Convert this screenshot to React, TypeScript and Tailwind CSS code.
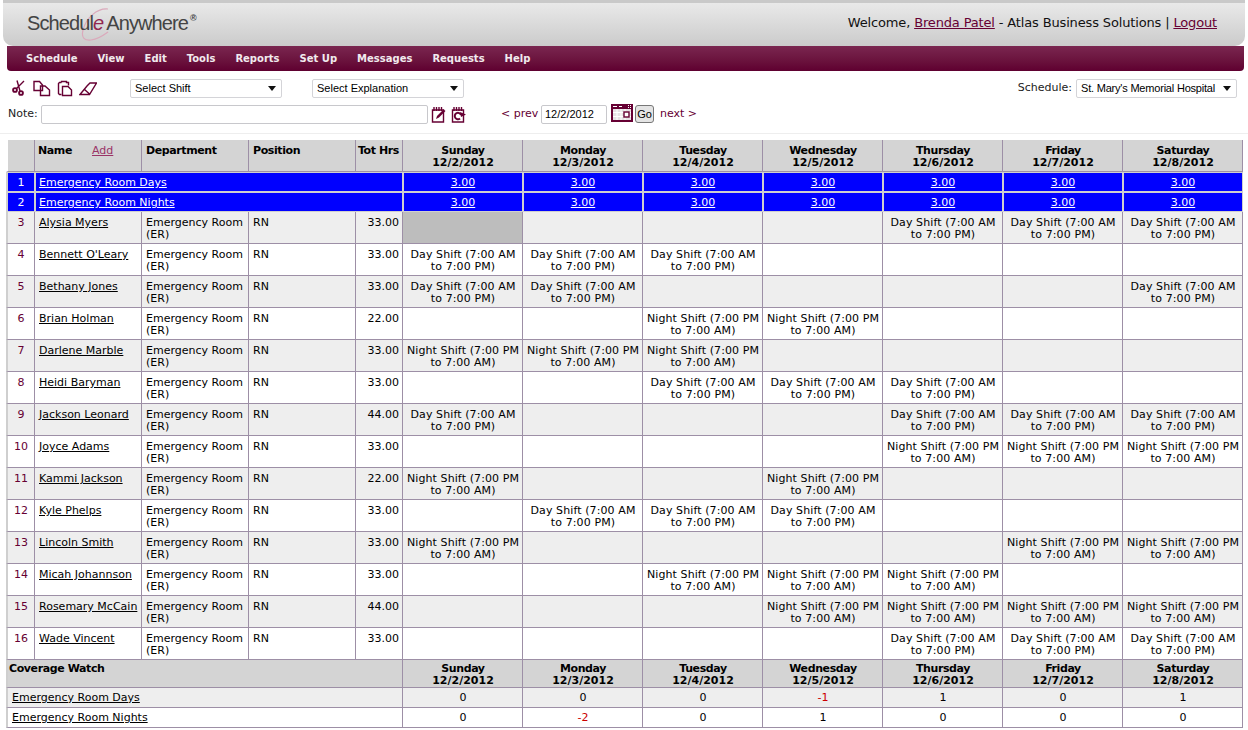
import React from 'react';

const DAYS = [
  ['Sunday', '12/2/2012'],
  ['Monday', '12/3/2012'],
  ['Tuesday', '12/4/2012'],
  ['Wednesday', '12/5/2012'],
  ['Thursday', '12/6/2012'],
  ['Friday', '12/7/2012'],
  ['Saturday', '12/8/2012'],
];

const NAV = ['Schedule', 'View', 'Edit', 'Tools', 'Reports', 'Set Up', 'Messages', 'Requests', 'Help'];

// D = day shift, N = night shift, X = greyed out, - = empty
const STAFF: [string, string, string][] = [
  ['Alysia Myers', '33.00', 'X---DDD'],
  ["Bennett O'Leary", '33.00', 'DDD----'],
  ['Bethany Jones', '33.00', 'DD----D'],
  ['Brian Holman', '22.00', '--NN---'],
  ['Darlene Marble', '33.00', 'NNN----'],
  ['Heidi Baryman', '33.00', '--DDD--'],
  ['Jackson Leonard', '44.00', 'D---DDD'],
  ['Joyce Adams', '33.00', '----NNN'],
  ['Kammi Jackson', '22.00', 'N--N---'],
  ['Kyle Phelps', '33.00', '-DDD---'],
  ['Lincoln Smith', '33.00', 'N----NN'],
  ['Micah Johannson', '33.00', '--NNN--'],
  ['Rosemary McCain', '44.00', '---NNNN'],
  ['Wade Vincent', '33.00', '----DDD'],
];

const COVERAGE: [string, number[]][] = [
  ['Emergency Room Days', [0, 0, 0, -1, 1, 0, 1]],
  ['Emergency Room Nights', [0, -2, 0, 1, 0, 0, 0]],
];

const grid = 'border-r border-b border-[#9d8fa6]';
const blueCell = 'border border-[#cfcfcf] bg-[#0000ff] text-white pt-[2px] leading-[14px]';
const edge = 'border-l-2 border-l-[#cfcfcf]';
const headText = 'align-top pt-[5px] font-bold leading-[12px] tracking-[-0.4px] whitespace-nowrap';
const bodyText = 'align-top pt-[5px] leading-[12px]';

function Icon({ children, w = 16 }: { children: React.ReactNode; w?: number }) {
  return (
    <svg width={w} height={17} viewBox={`0 0 ${w} 17`} fill="none" stroke="#660033" strokeWidth="1.4">
      {children}
    </svg>
  );
}

function Dropdown({ label, width, tight }: { label: string; width: string; tight?: boolean }) {
  return (
    <div className={`${width} h-[19px] flex items-center justify-between pl-[4px] pr-[5px] bg-white border border-[#d4d4d8] rounded-[2px] text-[11px] text-black whitespace-nowrap font-['Liberation_Sans',sans-serif]`}>
      <span className={tight ? 'tracking-[-0.2px]' : ''}>{label}</span>
      <svg width="8" height="5" viewBox="0 0 8 5"><path d="M0 0h8L4 5z" fill="#111" /></svg>
    </div>
  );
}

function DayHead({ top }: { top: string }) {
  return (
    <>
      {DAYS.map(([d, date]) => (
        <td key={d} className={`${grid} ${top} pl-[1px] text-center font-bold align-top leading-[12px]`}>
          <div className="tracking-[-0.4px]">{d}</div>
          <div>{date}</div>
        </td>
      ))}
    </>
  );
}

export default function App() {
  return (
    <div className="w-[1248px] h-[730px] overflow-hidden bg-white font-['DejaVu_Sans',sans-serif] text-[11px] text-black">
      {/* Header */}
      <div className="mx-[3px] h-[46px] relative z-10 border-t-[3px] border-[#c9c9c9] bg-gradient-to-b from-[#e9e9e9] to-[#cbcbcb] rounded-b-[10px] flex items-center justify-between pl-[24px] pr-[28px]">
        <div className="relative flex items-baseline font-['Liberation_Sans',sans-serif] text-[20px] leading-[28px] text-[#444] tracking-[-0.9px] -mt-[3px]">
          <svg className="absolute left-[50px] -top-[3px]" width="36" height="38" viewBox="0 0 36 38" fill="none" stroke="#dba9bb" strokeWidth="1.2">
            <path d="M31 3C20 2 9 12 6 24C4 32 8 35 14 34C21 33 27 29 31 26" />
          </svg>
          <span className="relative">Schedul</span>
          <span className="relative italic text-[#93264f] mr-[3px]">e</span>
          <span className="relative">Anywhere</span>
          <span className="relative text-[9px] leading-[10px] self-start mt-[4px] ml-[2px] font-bold tracking-normal">®</span>
        </div>
        <div className="text-[13px] text-[#111] -mt-[4px] tracking-[-0.15px] whitespace-nowrap">
          Welcome, <a className="underline text-[#660033]">Brenda Patel</a> - Atlas Business Solutions | <a className="underline text-[#660033]">Logout</a>
        </div>
      </div>

      {/* Nav */}
      <div className="ml-[7px] mr-[4px] h-[25px] bg-gradient-to-b from-[#7a2650] to-[#5f0030] rounded-b-[4px] flex items-center pl-[19px] gap-[20px] font-bold text-[#f1eaee] text-[10px]">
        {NAV.map(n => <span key={n}>{n}</span>)}
      </div>

      {/* Toolbar */}
      <div className="h-[63px] border-b border-[#eeeeee] pt-[8px]">
        <div className="flex items-center h-[19px]">
          <div className="flex items-center gap-[6px] ml-[11px] w-[119px]">
            <Icon>
              <circle cx="4" cy="10" r="1.9" strokeWidth="1.9" />
              <circle cx="10" cy="13" r="1.9" strokeWidth="1.9" />
              <path d="M5.5 8.5L13 1M9 11L6 0.5" />
            </Icon>
            <Icon w={18}>
              <path d="M1 1.5h5.5L9.5 5v5.5H1z" />
              <path d="M7.5 6H12l4.5 4v5.5h-9z" />
            </Icon>
            <Icon>
              <path d="M4.5 14.5H2.5l-1-1v-10l1-1h2M4.5 2.5v-1h5v1h2v3" />
              <path d="M5.5 6.5h5.5l3.5 3.5v5.5h-9z" />
            </Icon>
            <Icon w={18}>
              <path d="M1 14.5L8 6l3-3h6.5l-7 11.5zM5 9l5.5 5" />
            </Icon>
          </div>
          <Dropdown label="Select Shift" width="w-[152px]" />
          <div className="w-[30px]" />
          <Dropdown label="Select Explanation" width="w-[152px]" />
          <div className="flex-1" />
          <span className="mr-[4px] text-[#222]">Schedule:</span>
          <div className="mr-[11px]"><Dropdown label="St. Mary's Memorial Hospital" width="w-[161px]" tight /></div>
        </div>
        <div className="flex items-center h-[20px] mt-[6px]">
          <span className="ml-[8px] w-[33px] text-[#222]">Note:</span>
          <div className="w-[387px] h-[19px] bg-white border border-[#c8c8cc] rounded-[2px]" />
          <div className="flex items-center gap-[4px] ml-[3px] w-[70px]">
            <Icon>
              <path d="M1.5 4h11v12h-11zM3 1v4M5.5 1v4M8 1v4M10.5 1v4" />
              <path d="M5 13l1-3 6.5-6.5 2 1.5-6.5 6.5z" fill="#660033" stroke="none" />
            </Icon>
            <Icon>
              <path d="M1.5 4h11v12h-11zM3 1v4M5.5 1v4M8 1v4M10.5 1v4" />
              <path d="M10 9a3.2 3.2 0 1 0-1 3.5" strokeWidth="2" />
              <path d="M9 6l6 2.5-5 2.5z" fill="#660033" stroke="none" />
            </Icon>
          </div>
          <span className="text-[#660033] w-[40px] whitespace-nowrap">&lt; prev</span>
          <div className="w-[66px] h-[19px] flex items-center pl-[3px] border border-[#c8c8cc] rounded-[2px] font-['Liberation_Sans',sans-serif] text-[11px]">12/2/2012</div>
          <svg className="ml-[4px] -mt-[2px]" width="22" height="18" viewBox="0 0 22 18">
            <rect x="0" y="0" width="22" height="18" fill="#660033" />
            <rect x="2" y="5" width="18" height="11" fill="#e6e0e3" />
            <path d="M2 2.5h4M8 2.5h3" stroke="#fff" strokeWidth="1" />
            <path d="M17 1.5h1M19 1.5h1M17 3.5h1M19 3.5h1" stroke="#fff" strokeWidth="1" />
            <path d="M6 5v11M10 5v11M14 5v11M2 8.5h18M2 12.5h18" stroke="#fff" strokeWidth="1" />
            <rect x="13" y="8" width="5" height="5" fill="#fff" stroke="#660033" strokeWidth="1.4" />
          </svg>
          <div className="ml-[2px] w-[19px] h-[18px] flex items-center justify-center bg-[#e4e4e4] border border-[#777] rounded-[3px] text-[11px] font-['Liberation_Sans',sans-serif]">Go</div>
          <span className="ml-[6px] text-[#660033]">next &gt;</span>
        </div>
      </div>

      {/* Schedule grid */}
      <div className="pl-[6px] pt-[6px] w-[1243px]">
        <table className="table-fixed w-[1237px] border-separate border-spacing-0">
          <colgroup>
            <col className="w-[29px]" />
            <col className="w-[107px]" />
            <col className="w-[107px]" />
            <col className="w-[107px]" />
            <col className="w-[47px]" />
            <col className="w-[120px]" span={7} />
          </colgroup>
          <tbody>
            <tr className="h-[32px] bg-[#d4d4d4]">
              <td className={`${grid} border-l-2 border-l-white`} />
              <td className={`${grid} ${headText} pl-[3px]`}>
                <div className="flex">
                  <span className="w-[54px]">Name</span>
                  <a className="underline font-normal tracking-normal text-[#993366]">Add</a>
                </div>
              </td>
              <td className={`${grid} ${headText} pl-[4px]`}>Department</td>
              <td className={`${grid} ${headText} pl-[4px]`}>Position</td>
              <td className={`${grid} ${headText} pr-[3px] text-right`}>Tot Hrs</td>
              <DayHead top="pt-[5px]" />
            </tr>

            {COVERAGE.map(([name], i) => (
              <tr key={name} className="h-[20px]">
                <td className={`${blueCell} ${edge} text-center`}>{i + 1}</td>
                <td colSpan={4} className={`${blueCell} pl-[3px]`}><a className="underline">{name}</a></td>
                {DAYS.map(([d]) => (
                  <td key={d} className={`${blueCell} text-center`}><a className="underline">3.00</a></td>
                ))}
              </tr>
            ))}

            {STAFF.map(([name, hrs, shifts], i) => (
              <tr key={name} className={`h-[32px] ${i % 2 === 0 ? 'bg-[#eeeeee]' : 'bg-white'}`}>
                <td className={`${grid} ${edge} ${bodyText} text-center text-[#660033]`}>{i + 3}</td>
                <td className={`${grid} ${bodyText} pl-[4px]`}><a className="underline">{name}</a></td>
                <td className={`${grid} ${bodyText} pl-[4px]`}>Emergency Room (ER)</td>
                <td className={`${grid} ${bodyText} pl-[4px]`}>RN</td>
                <td className={`${grid} ${bodyText} pr-[3px] text-right`}>{hrs}</td>
                {shifts.split('').map((s, j) => (
                  <td key={j} className={`${grid} ${bodyText} pl-[1px] text-center tracking-[0.1px] whitespace-nowrap ${s === 'X' ? 'bg-[#bdbdbd]' : ''}`}>
                    {s === 'D' && <>Day Shift (7:00 AM<br />to 7:00 PM)</>}
                    {s === 'N' && <>Night Shift (7:00 PM<br />to 7:00 AM)</>}
                  </td>
                ))}
              </tr>
            ))}

            <tr className="h-[27px] bg-[#d4d4d4]">
              <td colSpan={5} className={`${grid} ${edge} ${headText} !pt-[3px] pl-[1px]`}>Coverage Watch</td>
              <DayHead top="pt-[3px]" />
            </tr>
            {COVERAGE.map(([name, vals], i) => (
              <tr key={name} className={`h-[20px] ${i === 0 ? 'bg-[#eeeeee]' : 'bg-white'}`}>
                <td colSpan={5} className={`${grid} ${edge} pl-[4px] pt-[1px]`}><a className="underline">{name}</a></td>
                {vals.map((v, j) => (
                  <td key={j} className={`${grid} pl-[1px] pt-[1px] text-center ${v < 0 ? 'text-[#cc0000]' : ''}`}>{v}</td>
                ))}
              </tr>
            ))}
          </tbody>
        </table>
      </div>
    </div>
  );
}
